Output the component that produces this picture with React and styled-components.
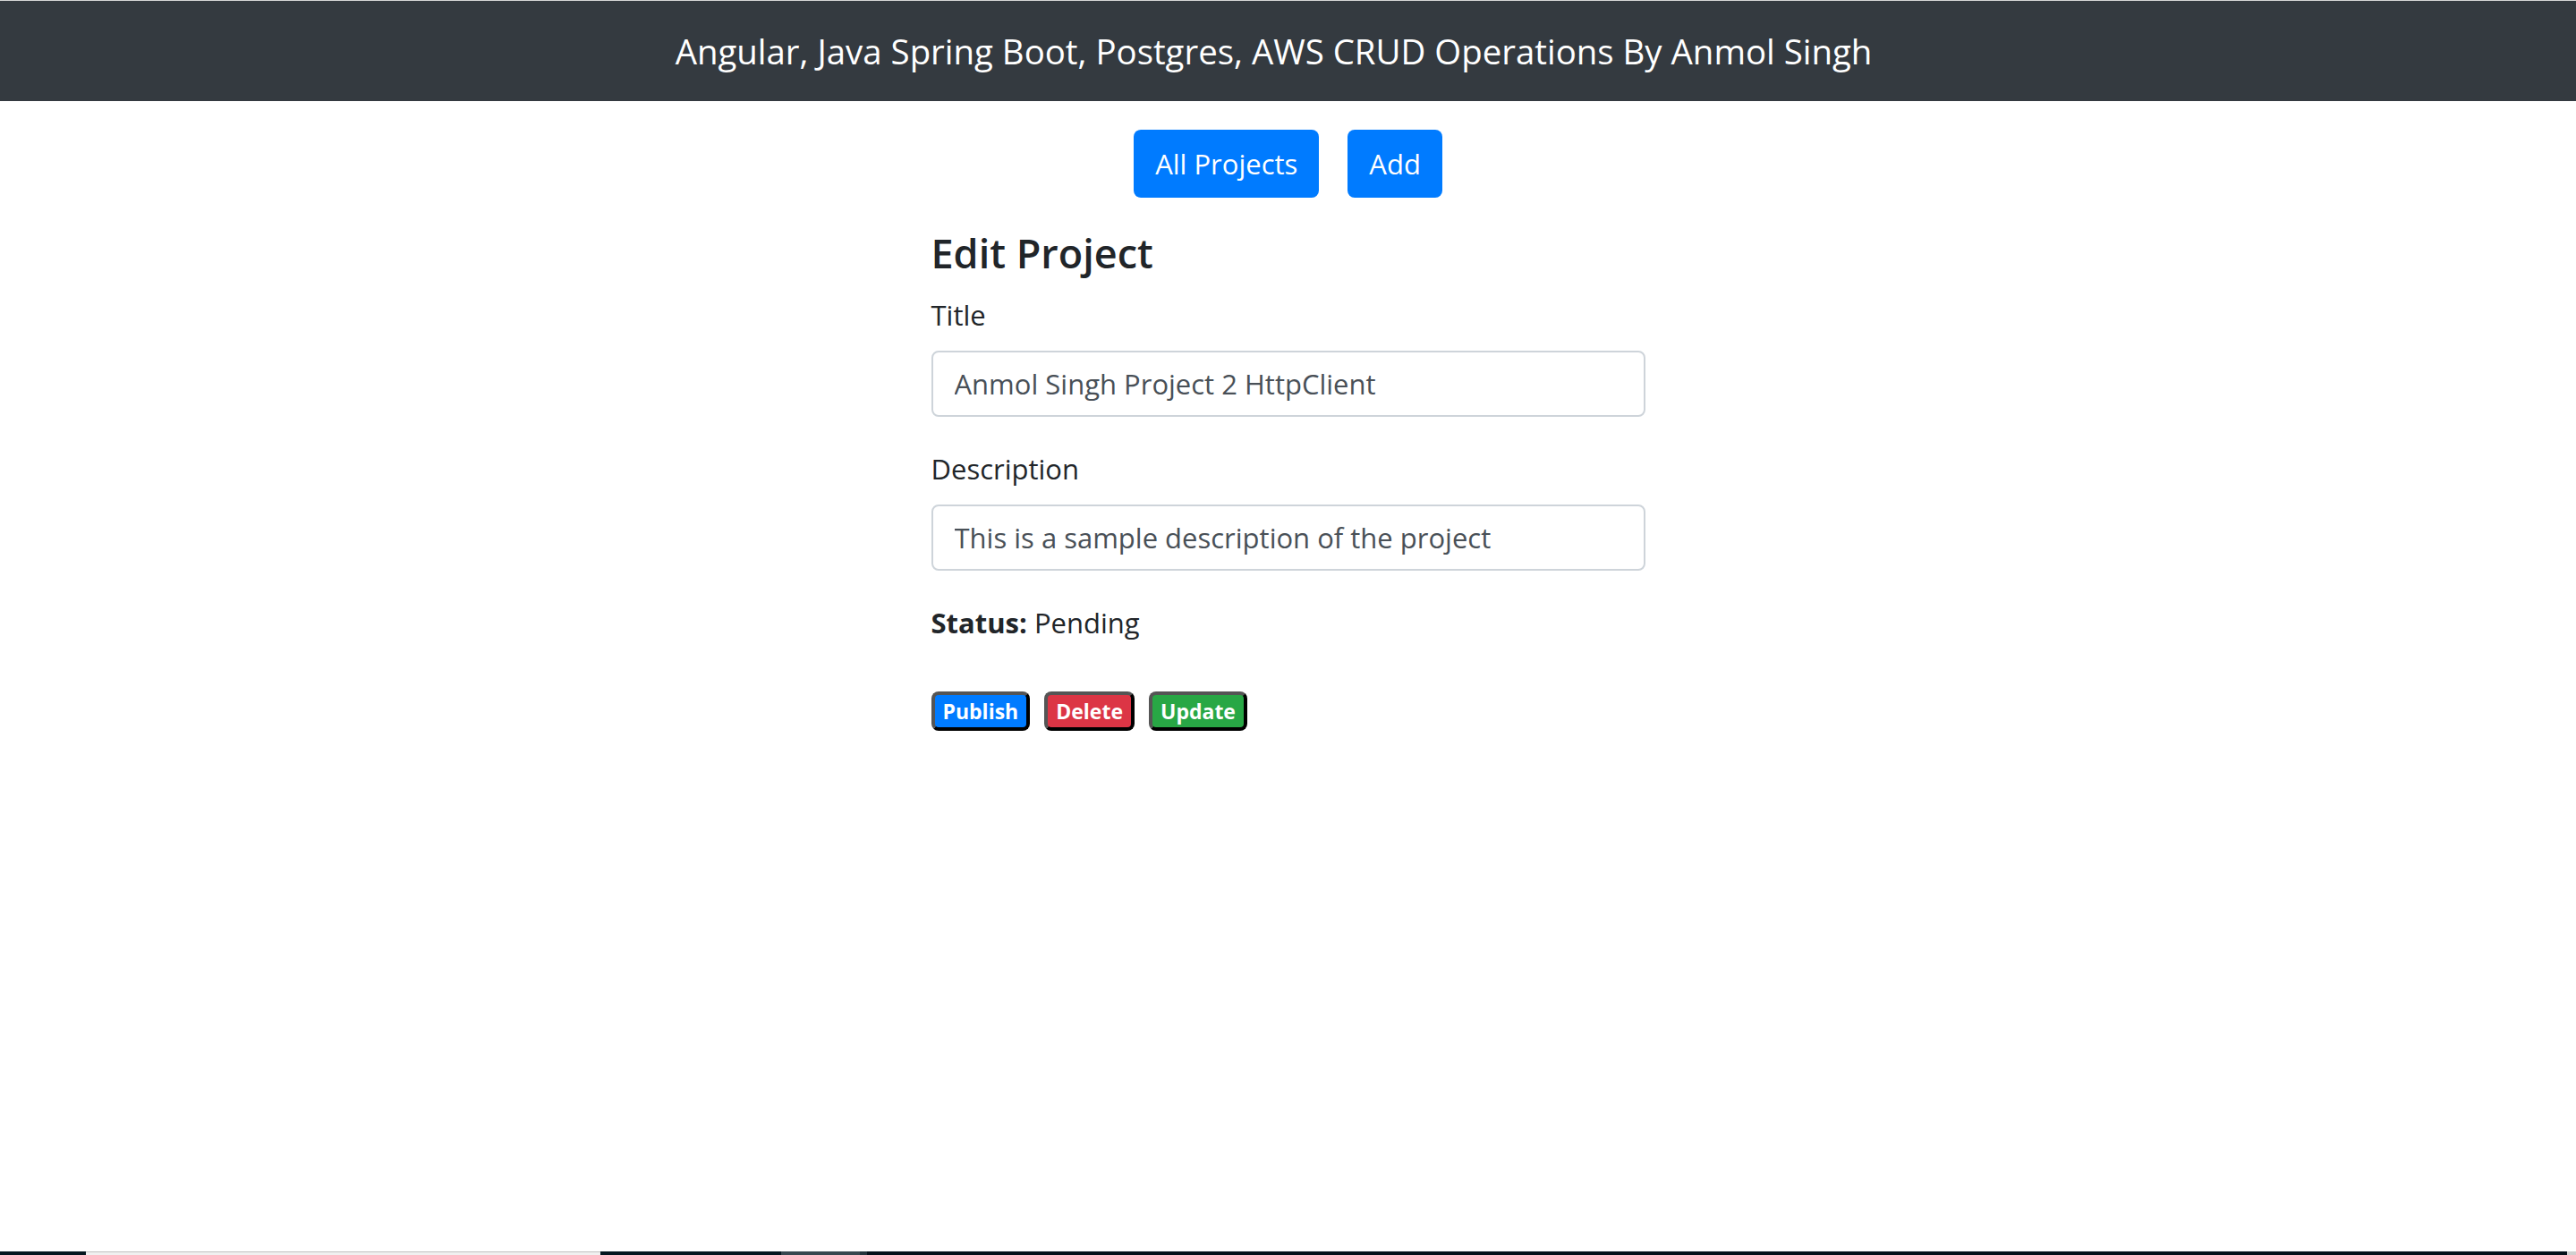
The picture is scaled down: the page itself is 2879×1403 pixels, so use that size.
import React from 'react';
import styled, { createGlobalStyle } from 'styled-components';

const colors = {
    primary: '#007bff',
    danger: '#dc3545',
    success: '#28a745',
};

function App() {
    return (
        <>
            <GlobalStyle />
            <Page>
                <Navbar>
                    <Brand>Angular, Java Spring Boot, Postgres, AWS CRUD Operations By Anmol Singh</Brand>
                </Navbar>
                <Main>
                    <NavLinks>
                        <NavButton>All Projects</NavButton>
                        <NavButton>Add</NavButton>
                    </NavLinks>
                    <FormColumn>
                        <Heading>Edit Project</Heading>
                        <Field>
                            <Label>Title</Label>
                            <Input defaultValue="Anmol Singh Project 2 HttpClient" />
                        </Field>
                        <Field>
                            <Label>Description</Label>
                            <Input defaultValue="This is a sample description of the project" />
                        </Field>
                        <Status>
                            <strong>Status:</strong> Pending
                        </Status>
                        <Actions>
                            <Badge variant="primary">Publish</Badge>
                            <Badge variant="danger">Delete</Badge>
                            <Badge variant="success">Update</Badge>
                        </Actions>
                    </FormColumn>
                </Main>
                {/* windows taskbar peeking in at the bottom of the screenshot */}
                <Taskbar>
                    <TaskSegment w={96} color="#04161f" />
                    <TaskSegment w={575} color="#f0f0f0" edge="#c0c0c0" />
                    <TaskSegment w={202} color="#04161f" />
                    <TaskSegment w={88} color="#37474f" />
                    <TaskSegment w={8} color="#24343c" />
                    <TaskSegment grow color="#04111a" />
                    <TaskSegment w={10} color="#d0d0d0" />
                </Taskbar>
            </Page>
        </>
    );
}

const GlobalStyle = createGlobalStyle`
    * { box-sizing: border-box; }
    body {
        margin: 0;
        font-family: "Open Sans", "Noto Sans", sans-serif;
        color: #212529;
        background: #fff;
    }
`

const Page = styled.div`
    min-height: 100vh;
    display: flex;
    flex-direction: column;
`

const Navbar = styled.header`
    height: 113px;
    border-top: 1px solid #d6d6d6;
    background-color: #343a40;
    display: flex;
    justify-content: center;
    align-items: center;
`

const Brand = styled.div`
    color: #fff;
    font-size: 38.4px;
    line-height: 112px;
    padding-right: 32px;
`

const Main = styled.main`
    flex: 1;
`

const NavLinks = styled.nav`
    display: flex;
    justify-content: center;
    gap: 32px;
    margin-top: 32px;
`

const NavButton = styled.button`
    height: 76px;
    padding: 0 24px;
    border: none;
    border-radius: 8px;
    background-color: ${colors.primary};
    color: #fff;
    font-family: inherit;
    font-size: 31px;
    line-height: 76px;
    cursor: pointer;
`

const FormColumn = styled.section`
    width: 798px;
    margin: 32px auto 0;
`

const Heading = styled.h4`
    margin: 0 0 15px;
    font-size: 45px;
    font-weight: 600;
    line-height: 60px;
`

const Field = styled.div`
    display: flex;
    flex-direction: column;
    gap: 16px;
    margin-bottom: 34px;

    & + & {
        margin-bottom: 34px;
    }
`

const Label = styled.label`
    font-size: 31px;
    line-height: 48px;
`

const Input = styled.input`
    width: 100%;
    height: 74px;
    padding: 0 24px;
    border: 2px solid #ced4da;
    border-radius: 8px;
    font-family: inherit;
    font-size: 31px;
    color: #495057;
    background: #fff;
    outline: none;
`

const Status = styled.p`
    margin: 0;
    font-size: 31px;
    line-height: 48px;

    strong {
        font-weight: 700;
    }
`

const Actions = styled.div`
    display: flex;
    gap: 16px;
    margin-top: 53px;
`

const Badge = styled.button`
    padding: 6px 9px;
    border-width: 4px;
    border-style: solid;
    border-color: #555 #000 #000 #555;
    border-radius: 8px;
    background-color: ${({ variant }) => colors[variant]};
    color: #fff;
    font-family: inherit;
    font-size: 23px;
    font-weight: 700;
    line-height: 24px;
    cursor: pointer;
`

const Taskbar = styled.footer`
    display: flex;
    height: 4px;
`

const TaskSegment = styled.div`
    flex: ${({ grow }) => (grow ? '1 1 auto' : '0 0 auto')};
    width: ${({ w }) => (w ? `${w}px` : 'auto')};
    background-color: ${({ color }) => color};
    border-top: ${({ edge }) => (edge ? `1px solid ${edge}` : 'none')};
`

export default App;
